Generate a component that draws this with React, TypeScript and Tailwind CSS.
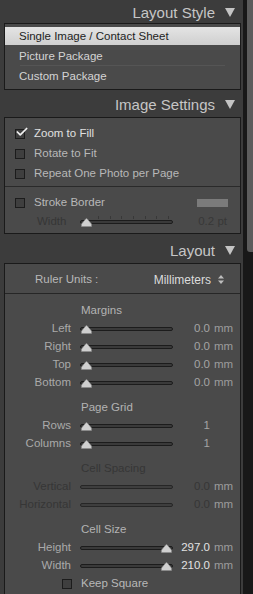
import { Check } from 'lucide-react';

const font = { fontFamily: '"Liberation Sans", Arial, sans-serif' };

function Header({ title }: { title: string }) {
    return (
        <div className="flex items-center justify-end h-full pr-[8px] gap-[10px] pt-[2px]">
            <span className="text-[15px] text-[#c6c6c6] leading-none">{title}</span>
            <svg width="10" height="9" viewBox="0 0 10 9">
                <path d="M0 0 H10 L5 9 Z" fill="#c4c4c4" />
            </svg>
        </div>
    );
}

function CheckBox({ checked = false }: { checked?: boolean }) {
    return (
        <div className="relative w-[10px] h-[10px] border border-[#1c1c1c] bg-[#3f3f3f] shrink-0">
            {checked && (
                <Check className="absolute -top-[5px] -left-[1px] w-[14px] h-[14px] text-[#f0f0f0]" strokeWidth={3} />
            )}
        </div>
    );
}

function Thumb() {
    return (
        <svg width="11" height="9" viewBox="0 0 11 9">
            <path d="M0.5 8.5 V6 L4.5 1.2 Q5.5 0 6.5 1.2 L10.5 6 V8.5 Z" fill="#cfcfcf" stroke="#8a8a8a" strokeWidth="0.6" />
        </svg>
    );
}

function Track({ pos, dim = false, ticks = false }: { pos?: 'min' | 'max'; dim?: boolean; ticks?: boolean }) {
    return (
        <div className="relative w-[93px] h-[8px] flex items-center">
            <div className={`w-full h-[4px] rounded-full border ${dim ? 'border-[#262626] bg-[#3e3e3e]' : 'border-[#1c1c1c] bg-[#3a3a3a]'}`} />
            {ticks && (
                <div className="absolute left-[18px] right-[4px] top-[-2px] flex justify-between">
                    {Array.from({ length: 7 }).map((_, i) => (
                        <div key={i} className="w-px h-[3px] bg-[#383838]" />
                    ))}
                </div>
            )}
            {pos === 'min' && <div className="absolute left-[1px] bottom-[-1px] flex"><Thumb /></div>}
            {pos === 'max' && <div className="absolute right-[1px] bottom-[-1px] flex"><Thumb /></div>}
        </div>
    );
}

function SliderRow({ label, value, unit, pos, dim = false, bright = false }: {
    label: string; value: string; unit?: string; pos?: 'min' | 'max'; dim?: boolean; bright?: boolean;
}) {
    return (
        <div className="flex items-center h-[18px] pt-[2px]">
            <div className={`w-[66px] text-right ${dim ? 'text-[#363636]' : 'text-[#a9a9a9]'}`}>{label}</div>
            <div className="ml-[9px]"><Track pos={pos} dim={dim} /></div>
            <div className={`w-[37px] text-right ${dim ? 'text-[#363636]' : bright ? 'text-[#e2e2e2]' : 'text-[#a4a4a4]'}`}>{value}</div>
            {unit && <div className="ml-[4px] text-[#9c9c9c]">{unit}</div>}
        </div>
    );
}

function SectionLabel({ text, dim = false }: { text: string; dim?: boolean }) {
    return (
        <div className={`h-[18px] mt-[7px] pt-[2px] flex items-center pl-[76px] ${dim ? 'text-[#363636]' : 'text-[#b3b3b3]'}`}>{text}</div>
    );
}

export default function App() {
    return (
        <div className="flex w-[253px] h-[594px] overflow-hidden bg-[#3c3c3c] text-[11.5px] leading-none" style={font}>
            <div className="w-[243px] flex flex-col">
                <div className="h-[23px] shrink-0"><Header title="Layout Style" /></div>

                <div className="ml-[4px] mr-[2px] border border-[#1a1a1a] bg-[#4a4a4a] h-[67px] shrink-0 pt-[3px]">
                    <div className="h-[18px] flex items-center pt-[2px] pl-[14px] bg-gradient-to-b from-[#e4e4e4] to-[#cfcfcf] text-[#1e1e1e]">
                        Single Image / Contact Sheet
                    </div>
                    <div className="h-[20px] flex items-center pt-[3px] pl-[14px] text-[#d4d4d4]">Picture Package</div>
                    <div className="mx-[15px] h-px bg-[#555]" />
                    <div className="h-[20px] flex items-center pt-[2px] pl-[14px] text-[#d4d4d4]">Custom Package</div>
                </div>

                <div className="h-[27px] shrink-0"><Header title="Image Settings" /></div>

                <div className="ml-[4px] mr-[2px] border border-[#1a1a1a] bg-[#4a4a4a] h-[117px] shrink-0">
                    <div className="pt-[5px] pb-[3px]">
                        <div className="h-[20px] flex items-center pt-[2px] pl-[10px] gap-[9px] text-[#e0e0e0]">
                            <CheckBox checked /> Zoom to Fill
                        </div>
                        <div className="h-[20px] flex items-center pt-[2px] pl-[10px] gap-[9px] text-[#b8b8b8]">
                            <CheckBox /> Rotate to Fit
                        </div>
                        <div className="h-[20px] flex items-center pt-[2px] pl-[10px] gap-[9px] text-[#b8b8b8]">
                            <CheckBox /> Repeat One Photo per Page
                        </div>
                    </div>
                    <div className="h-px bg-[#2a2a2a]" />
                    <div className="pt-[5px]">
                        <div className="h-[20px] flex items-center pt-[2px] pl-[10px] gap-[9px] text-[#b8b8b8]">
                            <CheckBox /> Stroke Border
                            <div className="ml-auto mr-[12px] w-[31px] h-[8px] bg-[#7b7b7b]" />
                        </div>
                        <div className="h-[18px] flex items-center pt-[2px]">
                            <div className="w-[64px] pl-[32px] text-[#363636]">Width</div>
                            <div className="ml-[11px]"><Track pos="min" ticks /></div>
                            <div className="ml-auto mr-[13px] text-[#383838]">0.2 pt</div>
                        </div>
                    </div>
                </div>

                <div className="h-[29px] shrink-0 pt-[2px]"><Header title="Layout" /></div>

                <div className="ml-[4px] mr-[2px] border border-[#1a1a1a] border-b-0 bg-[#4a4a4a] flex-1">
                    <div className="h-[29px] flex items-center pt-[2px] pl-[30px] pr-[16px] text-[#b8b8b8]">
                        <span>Ruler Units :</span>
                        <span className="ml-auto text-[#dcdcdc] text-[12px]">Millimeters</span>
                        <svg width="6" height="9" viewBox="0 0 6 9" className="ml-[7px]">
                            <path d="M0 3.5 L3 0 L6 3.5 Z M0 5.5 L3 9 L6 5.5 Z" fill="#bdbdbd" />
                        </svg>
                    </div>
                    <div className="h-px bg-[#262626]" />

                    <SectionLabel text="Margins" />
                    <SliderRow label="Left" value="0.0" unit="mm" pos="min" />
                    <SliderRow label="Right" value="0.0" unit="mm" pos="min" />
                    <SliderRow label="Top" value="0.0" unit="mm" pos="min" />
                    <SliderRow label="Bottom" value="0.0" unit="mm" pos="min" />

                    <SectionLabel text="Page Grid" />
                    <SliderRow label="Rows" value="1" pos="min" />
                    <SliderRow label="Columns" value="1" pos="min" />

                    <SectionLabel text="Cell Spacing" dim />
                    <SliderRow label="Vertical" value="0.0" unit="mm" dim />
                    <SliderRow label="Horizontal" value="0.0" unit="mm" dim />

                    <SectionLabel text="Cell Size" />
                    <SliderRow label="Height" value="297.0" unit="mm" pos="max" bright />
                    <SliderRow label="Width" value="210.0" unit="mm" pos="max" bright />

                    <div className="h-[18px] flex items-center pt-[1px] pl-[57px] gap-[9px] text-[#b8b8b8]">
                        <CheckBox /> Keep Square
                    </div>
                </div>
            </div>

            <div className="w-[10px] bg-[#181818] pl-[4px]">
                <div className="w-[6px] h-[252px] bg-[#5c5c5c] rounded-bl-[3px]" />
            </div>
        </div>
    );
}
